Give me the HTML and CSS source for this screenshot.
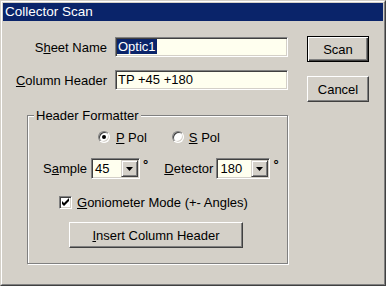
FILE: index.html
```html
<!DOCTYPE html>
<html lang="en">
<head>
    <meta charset="UTF-8">
    <title>Collector Scan</title>
    <link rel="stylesheet" href="styles.css">
</head>
<body>
<div class="window">
  <div class="frame">
    <div class="titlebar">Collector Scan</div>
    <div class="client">
      <div class="main">
        <div class="fields">
          <label class="lbl">S<u>h</u>eet Name</label>
          <div class="textbox"><span class="sel">Optic1</span></div>
          <label class="lbl"><u>C</u>olumn Header</label>
          <div class="textbox">TP +45 +180</div>
        </div>

        <fieldset class="group">
          <legend>Header Formatter</legend>

          <div class="pol-row">
            <span class="radio checked"></span>
            <span class="opt"><u>P</u> Pol</span>
            <span class="radio second"></span>
            <span class="opt"><u>S</u> Pol</span>
          </div>

          <div class="angle-row">
            <span class="lbl-sample">S<u>a</u>mple</span>
            <div class="combo small">
              <span class="combo-text">45</span>
              <span class="drop"><svg width="7" height="4" viewBox="0 0 7 4"><path d="M0 0h7L3.5 4z" fill="#000"/></svg></span>
            </div>
            <span class="deg">°</span>
            <span class="lbl-detector"><u>D</u>etector</span>
            <div class="combo wide">
              <span class="combo-text">180</span>
              <span class="drop"><svg width="7" height="4" viewBox="0 0 7 4"><path d="M0 0h7L3.5 4z" fill="#000"/></svg></span>
            </div>
            <span class="deg">°</span>
          </div>

          <div class="check-row">
            <span class="checkbox"><svg width="9" height="9" viewBox="0 0 9 9"><path d="M1 3v3l2 2l5-5v-3l-5 5z" fill="#000"/></svg></span>
            <span class="opt"><u>G</u>oniometer Mode (+- Angles)</span>
          </div>

          <button class="btn insert"><u>I</u>nsert Column Header</button>
        </fieldset>
      </div>

      <div class="side">
        <button class="btn default">Scan</button>
        <button class="btn">Cancel</button>
      </div>
    </div>
  </div>
</div>
</body>
</html>
```

FILE: styles.css
```css
* {
    box-sizing: border-box;
}

body {
    margin: 0;
    font-family: "Liberation Sans", Arial, sans-serif;
    font-size: 13px;
    color: #000;
    background: #d4d0c8;
}

.window {
    width: 386px;
    height: 286px;
    border: 1px solid;
    border-color: #d4d0c8 #404040 #404040 #d4d0c8;
}

.frame {
    height: 100%;
    border: 1px solid;
    border-color: #fff #808080 #808080 #fff;
    padding: 1px;
    display: flex;
    flex-direction: column;
    background: #d4d0c8;
}

.titlebar {
    height: 18px;
    line-height: 18px;
    background: #0a246a;
    color: #fff;
    padding-left: 2px;
    font-size: 13.5px;
}

.client {
    display: flex;
    flex: 1;
}

.main {
    width: 286px;
    padding-top: 16px;
}

.fields {
    display: grid;
    grid-template-columns: 104px 173px;
    column-gap: 8px;
    row-gap: 13px;
    align-items: center;
}

.lbl {
    text-align: right;
}

.textbox {
    height: 20px;
    line-height: 16px;
    border: 1px solid;
    border-color: #808080 #fff #fff #808080;
    box-shadow: inset 1px 1px 0 #404040, inset -1px -1px 0 #d4d0c8;
    background: #ffffef;
    padding: 1px 2px 0 2px;
    white-space: nowrap;
}

.sel {
    background: #0a246a;
    color: #fff;
    display: inline-block;
    line-height: 15px;
    margin-left: -1px;
    padding: 0 1px;
}

.group {
    margin: 18px 0 0 24px;
    padding: 0;
    width: 261px;
    height: 156px;
    border: 1px solid #808080;
    box-shadow: inset 1px 1px 0 #fff, 1px 1px 0 #fff;
    min-width: 0;
}

.group legend {
    margin-left: 6px;
    padding: 0 2px;
    line-height: 15px;
    background: #d4d0c8;
}

.pol-row {
    display: flex;
    align-items: center;
    height: 16px;
    margin: 6px 0 0 70px;
}

.radio {
    width: 12px;
    height: 12px;
    border-radius: 50%;
    border: 1px solid;
    border-color: #808080 #fff #fff #808080;
    box-shadow: inset 1px 1px 0 #404040, inset -1px -1px 0 #d4d0c8;
    background: #fff;
    display: flex;
    align-items: center;
    justify-content: center;
    margin-right: 6px;
}

.radio.checked::after {
    content: "";
    width: 4px;
    height: 4px;
    border-radius: 50%;
    background: #000;
}

.radio.second {
    margin-left: 25px;
    margin-right: 5px;
}

.angle-row {
    display: flex;
    align-items: center;
    height: 21px;
    margin: 13px 0 0 15px;
}

.lbl-sample {
    margin-right: 4px;
}

.lbl-detector {
    margin-left: 16px;
    margin-right: 3px;
}

.combo {
    display: flex;
    height: 21px;
    border: 1px solid;
    border-color: #808080 #fff #fff #808080;
    box-shadow: inset 1px 1px 0 #404040, inset -1px -1px 0 #d4d0c8;
    background: #ffffef;
    padding: 1px;
}

.combo.small {
    width: 49px;
}

.combo.wide {
    width: 54px;
}

.combo-text {
    flex: 1;
    line-height: 17px;
    padding-left: 2px;
}

.drop {
    width: 17px;
    height: 17px;
    border: 1px solid;
    border-color: #d4d0c8 #404040 #404040 #d4d0c8;
    box-shadow: inset 1px 1px 0 #fff, inset -1px -1px 0 #808080;
    background: #d4d0c8;
    display: flex;
    align-items: center;
    justify-content: center;
}

.deg {
    align-self: flex-start;
    margin-left: 3px;
    line-height: 14px;
    font-weight: bold;
}

.check-row {
    display: flex;
    align-items: center;
    height: 17px;
    margin: 15px 0 0 31px;
}

.checkbox {
    width: 13px;
    height: 13px;
    border: 1px solid;
    border-color: #808080 #fff #fff #808080;
    box-shadow: inset 1px 1px 0 #404040, inset -1px -1px 0 #d4d0c8;
    background: #fff;
    display: flex;
    align-items: center;
    justify-content: center;
    margin-right: 5px;
}

.btn {
    font: inherit;
    color: #000;
    height: 26px;
    padding: 0;
    background: #d4d0c8;
    border: 1px solid;
    border-color: #fff #404040 #404040 #fff;
    box-shadow: inset -1px -1px 0 #808080;
    display: block;
}

.btn.default {
    border-color: #000;
    box-shadow: inset 1px 1px 0 #fff, inset -1px -1px 0 #404040, inset -2px -2px 0 #808080;
}

.insert {
    width: 174px;
    margin: 11px 0 0 41px;
}

.side {
    padding: 15px 0 0 18px;
    display: flex;
    flex-direction: column;
    gap: 14px;
}

.side .btn {
    width: 62px;
}
```
